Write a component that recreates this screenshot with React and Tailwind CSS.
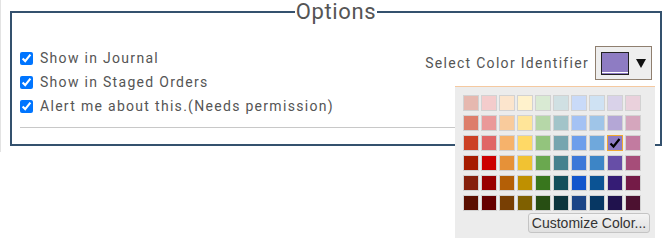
import React from "react";

const ROWS = [
  ["#e6b8af", "#f4cccc", "#fce5cd", "#fff2cc", "#d9ead3", "#d0e0e3", "#c9daf8", "#cfe2f3", "#d9d2e9", "#ead1dc"],
  ["#dd7e6b", "#ea9999", "#f9cb9c", "#ffe599", "#b6d7a8", "#a2c4c9", "#a4c2f4", "#9fc5e8", "#b4a7d6", "#d5a6bd"],
  ["#cc4125", "#e06666", "#f6b26b", "#ffd966", "#93c47d", "#76a5af", "#6d9eeb", "#6fa8dc", "#8e7cc3", "#c27ba0"],
  ["#a61c00", "#cc0000", "#e69138", "#f1c232", "#6aa84f", "#45818e", "#3c78d8", "#3d85c6", "#674ea7", "#a64d79"],
  ["#85200c", "#990000", "#b45f06", "#bf9000", "#38761d", "#134f5c", "#1155cc", "#0b5394", "#351c75", "#741b47"],
  ["#5b0f00", "#660000", "#783f04", "#7f6000", "#274e13", "#0c343d", "#1c4587", "#073763", "#20124d", "#4c1130"],
];

const SELECTED = "#8e7cc3";

function Row({ label }) {
  return (
    <label className="flex items-center h-[24px] gap-[7px]">
      <input type="checkbox" defaultChecked className="w-[13px] h-[13px] accent-[#0075ff]" />
      <span>{label}</span>
    </label>
  );
}

export default function App() {
  return (
    <div
      className="relative w-[670px] h-[238px] bg-white overflow-hidden text-[#555] tracking-[1.3px]"
      style={{ fontFamily: "Roboto, 'Liberation Sans', sans-serif" }}
    >
      <div className="h-[152px] border-l border-[#e3e3e3] pl-[9px]">
        <fieldset className="w-[652px] border-2 border-[#34516e] px-[8px] pb-[16px]">
          <legend className="mx-auto px-[1px] text-[22px] leading-[24px] tracking-[0.6px] text-[#555]">
            Options
          </legend>
          <div className="flex justify-between pt-[22px] text-[14px]">
            <div className="flex flex-col">
              <Row label="Show in Journal" />
              <Row label="Show in Staged Orders" />
              <Row label="Alert me about this.(Needs permission)" />
            </div>
            <div className="flex items-center gap-[6px] h-[34px]">
              <span>Select Color Identifier</span>
              <div className="w-[57px] h-[34px] border border-[#8f7f6f] bg-[#eeeeee] flex items-center pl-[5px] gap-[7px]">
                <div className="w-[28px] h-[23px] border border-[#222] bg-[#8e7cc3] flex flex-col justify-end">
                  <div className="h-[1px] bg-white mb-[1px]" />
                </div>
                <svg width="10" height="9" viewBox="0 0 10 9">
                  <polygon points="0,0 10,0 5,9" fill="#111" />
                </svg>
              </div>
            </div>
          </div>
          <div className="mt-[9px] h-[1px] bg-[#c8c8c8]" />
        </fieldset>
      </div>

      <div className="absolute left-[455px] top-[86px] w-[200px] h-[160px] bg-[#ececec] border-t border-[#f5c9a0] pt-[8px] pl-[8px] pr-[5px]">
        <div className="grid grid-cols-[repeat(10,16px)] gap-x-[2px] gap-y-[4px]">
          {ROWS.flat().map((c, i) => {
            const sel = c === SELECTED;
            return (
              <div
                key={i}
                className={
                  sel
                    ? "w-[16px] h-[16px] border border-[#f0a830] flex items-center justify-center"
                    : "w-[16px] h-[16px] border border-[#d2d2d2]"
                }
                style={{ backgroundColor: c }}
              >
                {sel && (
                  <svg width="12" height="12" viewBox="0 0 12 12">
                    <path d="M1.5 6.5 L4.5 9.5 L10.5 2" fill="none" stroke="#000" strokeWidth="2.2" />
                  </svg>
                )}
              </div>
            );
          })}
        </div>
        <div className="flex justify-end mt-[2px]">
          <button
            className="w-[122px] h-[20px] border border-[#c4c4c4] rounded-[3px] bg-gradient-to-b from-[#f4f4f4] to-[#e0e0e0] text-[14px] leading-[18px] text-[#333] tracking-normal"
            style={{ fontFamily: "'Liberation Sans', Arial, sans-serif" }}
          >
            Customize Color...
          </button>
        </div>
      </div>
    </div>
  );
}
